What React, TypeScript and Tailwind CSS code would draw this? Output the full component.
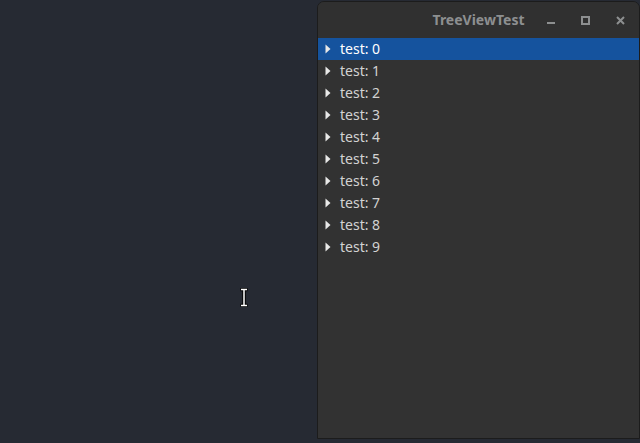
const ROWS = Array.from({ length: 10 }, (_, i) => `test: ${i}`)

function Arrow() {
    return (
        <svg width="6" height="10" viewBox="0 0 6 10" className="shrink-0">
            <path d="M0.5 0.5 L5.5 5 L0.5 9.5 Z" fill="#e8e8e7" />
        </svg>
    )
}

function TitleButtons() {
    return (
        <div className="absolute right-[2px] top-0 h-[36px] flex items-center">
            <div className="w-[35px] h-full flex items-center justify-center">
                <div className="w-[8px] h-[2px] bg-[#8d8f90] mt-[6px]" />
            </div>
            <div className="w-[35px] h-full flex items-center justify-center">
                <div className="w-[9px] h-[9px] border-2 border-[#8d8f90]" />
            </div>
            <div className="w-[34px] h-full flex items-center justify-center">
                <svg width="9" height="9" viewBox="0 0 9 9">
                    <path d="M1 1 L8 8 M8 1 L1 8" stroke="#8d8f90" strokeWidth="2" />
                </svg>
            </div>
        </div>
    )
}

export default function App() {
    return (
        <div
            className="relative w-[640px] h-[443px] bg-[#262a33] overflow-hidden"
            style={{ fontFamily: '"Noto Sans", "Open Sans", sans-serif' }}
        >
            <div className="absolute left-[317px] top-[1px] w-[323px] h-[438px] bg-[#323232] border border-[#1c1c1c] rounded-t-[7px] flex flex-col overflow-hidden">
                <div className="relative h-[36px] shrink-0 bg-[#303030] flex items-center justify-center pb-[1px]">
                    <span className="text-[14px] font-bold text-[#8d8f90]">TreeViewTest</span>
                    <TitleButtons />
                </div>
                <div className="flex flex-col">
                    {ROWS.map((label, i) => (
                        <div
                            key={i}
                            className={
                                "h-[22px] flex items-center gap-[9px] pl-[7px] " +
                                (i === 0 ? "bg-[#15539e] text-[#ffffff]" : "text-[#d3d3d2]")
                            }
                        >
                            <Arrow />
                            <span className="text-[14px] leading-none">{label}</span>
                        </div>
                    ))}
                </div>
            </div>
            <svg className="absolute left-[239px] top-[288px]" width="10" height="19" viewBox="0 0 10 19">
                <path
                    d="M1.5 1.5 H8.5 M5 1.5 V17.5 M1.5 17.5 H8.5"
                    stroke="#000"
                    strokeWidth="3.5"
                    fill="none"
                />
                <path d="M2 1.5 H8 M5 1.5 V17.5 M2 17.5 H8" stroke="#fff" strokeWidth="1.5" fill="none" />
            </svg>
        </div>
    )
}
